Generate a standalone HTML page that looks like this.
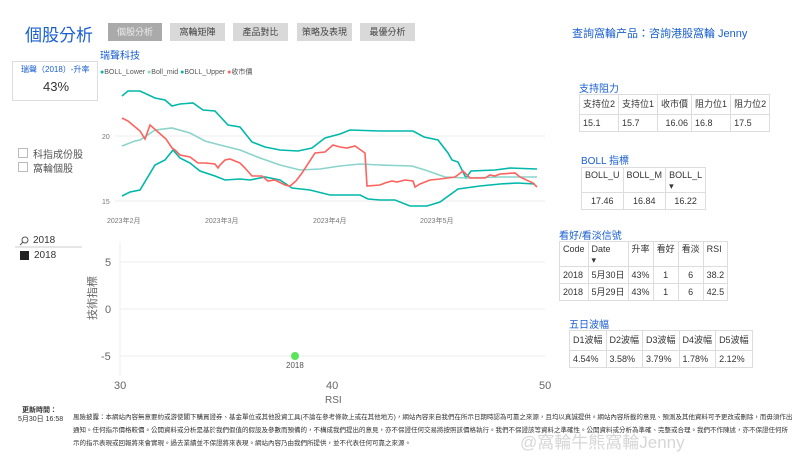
<!DOCTYPE html>
<html><head><meta charset="utf-8"><style>
body{margin:0;width:800px;height:462px;background:#fff;font-family:"Liberation Sans","Noto Sans CJK TC",sans-serif;position:relative;overflow:hidden;color:#333}
.a{position:absolute;white-space:nowrap}
.tab{position:absolute;top:23px;height:18px;background:#d9d9d9;font-size:9px;color:#444;text-align:center;line-height:18px}
table{border-collapse:collapse;font-size:9px;position:absolute;background:#fff}
td{border:1px solid #ddd;padding:0 3px;height:16px;line-height:11px;color:#333}
.h{color:#1a5fd0;font-size:10px}
</style></head><body>
<div class="a" style="left:25px;top:21px;font-size:17px;color:#1a5fd0">個股分析</div>
<div class="tab" style="left:108px;width:54px;background:#aaa;color:#eee">個股分析</div>
<div class="tab" style="left:170px;width:55px">窩輪矩陣</div>
<div class="tab" style="left:233px;width:55px">產品對比</div>
<div class="tab" style="left:297px;width:55px">策略及表現</div>
<div class="tab" style="left:360px;width:55px">最優分析</div>
<div class="a" style="left:572px;top:25px;font-size:11px;color:#1a5fd0">查詢窩輪产品：咨詢港股窩輪 Jenny</div>
<div class="a h" style="left:100px;top:47px">瑞聲科技</div>
<div class="a" style="left:12px;top:61px;width:84px;height:38px;border:1px solid #ddd"></div>
<div class="a" style="left:21px;top:64px;font-size:8px;color:#1a5fd0">瑞聲（2018）-升率</div>
<div class="a" style="left:43px;top:79px;font-size:13px">43%</div>
<div class="a" style="left:100px;top:67px;font-size:7px;color:#555"><span style="color:#01b8aa">●</span>BOLL_Lower <span style="color:#8ad4cc">●</span>Boll_mid <span style="color:#01b8aa">●</span>BOLL_Upper <span style="color:#fd625e">●</span>收市價</div>
<div class="a" style="left:18px;top:146px;font-size:10px;color:#555"><span style="display:inline-block;width:8px;height:8px;border:1px solid #bbb;margin-right:5px"></span>科指成份股</div>
<div class="a" style="left:18px;top:160px;font-size:10px;color:#555"><span style="display:inline-block;width:8px;height:8px;border:1px solid #bbb;margin-right:5px"></span>窩輪個股</div>
<svg class="a" style="left:0;top:0" width="800" height="462">
<g font-size="7" fill="#777"><text x="102" y="139">20</text><text x="102" y="204">15</text>
<text x="107" y="223">2023年2月</text><text x="205" y="223">2023年3月</text><text x="313" y="223">2023年4月</text><text x="420" y="223">2023年5月</text></g>
<line x1="115" y1="136" x2="545" y2="136" stroke="#eee"/><line x1="115" y1="201" x2="545" y2="201" stroke="#eee"/>
<g fill="none" stroke-width="1.6">
<polyline stroke="#01b8aa" points="122,96 128,91 140,91 155,98 165,100 172,106 180,104 193,103 203,110 215,111 228,125 240,127 252,142 265,147 280,150 298,151 312,148 325,138 340,134 350,130 380,131 413,131 424,137 438,140 448,153 452,160 458,162 466,178 471,171 495,170 510,168 537,169"/>
<polyline stroke="#8ad4cc" points="122,146 135,141 140,140 155,130 172,128 190,133 205,141 220,145 240,150 260,158 280,165 300,170 320,169 340,166 360,164 380,165 412,166 425,170 445,177 467,178 500,177 537,177"/>
<polyline stroke="#01b8aa" points="122,196 130,192 140,190 155,165 165,160 173,150 180,158 190,163 200,171 215,176 225,180 240,179 250,180 265,177 280,180 292,188 310,190 330,195 360,195 368,199 380,200 395,200 410,206 427,206 440,202 458,189 480,186 500,184 517,183 535,184"/>
<polyline stroke="#fd625e" points="122,118 128,121 140,131 145,139 150,125 158,132 166,139 172,148 175,150 180,155 190,157 198,163 205,163 215,164 218,168 220,165 225,160 230,159 240,163 245,168 252,176 262,176 268,181 275,180 285,185 290,186 296,181 302,173 315,153 325,152 333,145 340,147 347,148 355,146 365,153 367,186 380,185 385,183 392,181 397,182 405,180 413,181 415,187 420,184 430,180 440,179 455,177 463,171 470,178 485,178 490,175 495,176 500,174 515,173 520,177 533,183 537,187"/>
</g>
<line x1="120" y1="242" x2="120" y2="376" stroke="#eee"/>
<line x1="120" y1="262" x2="545" y2="262" stroke="#eee"/><line x1="120" y1="309" x2="545" y2="309" stroke="#eee"/><line x1="120" y1="356" x2="545" y2="356" stroke="#eee"/>
<g font-size="11" fill="#666"><text x="105" y="266">5</text><text x="105" y="313">0</text><text x="101" y="360">-5</text>
<text x="114" y="389">30</text><text x="326" y="389">40</text><text x="539" y="389">50</text><text x="325" y="403" font-size="10">RSI</text></g>
<text x="0" y="0" font-size="11" fill="#666" transform="translate(96,320) rotate(-90)">技術指標</text>
<circle cx="295" cy="356" r="4" fill="#5be35b"/><text x="286" y="368" font-size="8" fill="#555">2018</text>
<circle cx="25" cy="240" r="3" fill="none" stroke="#555"/><line x1="23" y1="242" x2="20" y2="245" stroke="#555"/>
<line x1="15" y1="247" x2="82" y2="247" stroke="#ccc"/><rect x="20" y="251" width="9" height="9" fill="#222"/>
</svg>
<div class="a" style="left:33px;top:235px;font-size:10px">2018</div>
<div class="a" style="left:34px;top:250px;font-size:10px">2018</div>
<div class="a h" style="left:579px;top:80px">支持阻力</div>
<table style="left:579px;top:94px"><tr><td style="height:19px">支持位2</td><td>支持位1</td><td>收市價</td><td>阻力位1</td><td>阻力位2</td></tr><tr><td>15.1</td><td>15.7</td><td style="text-align:right">16.06</td><td>16.8</td><td>17.5</td></tr></table>
<div class="a h" style="left:581px;top:152px">BOLL 指標</div>
<table style="left:581px;top:167px"><tr><td style="height:20px;vertical-align:top;padding-top:2px">BOLL_U</td><td style="vertical-align:top;padding-top:2px">BOLL_M</td><td style="vertical-align:top;padding-top:2px">BOLL_L<br>▾</td></tr><tr><td style="text-align:center">17.46</td><td style="text-align:center">16.84</td><td style="text-align:center">16.22</td></tr></table>
<div class="a h" style="left:559px;top:227px">看好/看淡信號</div>
<table style="left:559px;top:241px"><tr><td style="height:21px;vertical-align:top;padding-top:2px">Code</td><td style="vertical-align:top;padding-top:2px">Date<br>▾</td><td style="vertical-align:top;padding-top:2px">升率</td><td style="vertical-align:top;padding-top:2px">看好</td><td style="vertical-align:top;padding-top:2px">看淡</td><td style="vertical-align:top;padding-top:2px">RSI</td></tr><tr><td>2018</td><td>5月30日</td><td>43%</td><td style="text-align:center">1</td><td style="text-align:center">6</td><td>38.2</td></tr><tr><td>2018</td><td>5月29日</td><td>43%</td><td style="text-align:center">1</td><td style="text-align:center">6</td><td>42.5</td></tr></table>
<div class="a h" style="left:569px;top:316px">五日波幅</div>
<table style="left:569px;top:330px"><tr><td style="height:19px">D1波幅</td><td>D2波幅</td><td>D3波幅</td><td>D4波幅</td><td>D5波幅</td></tr><tr><td>4.54%</td><td>3.58%</td><td>3.79%</td><td>1.78%</td><td>2.12%</td></tr></table>
<div class="a" style="left:22px;top:405px;font-size:7px;font-weight:bold">更新時間：</div>
<div class="a" style="left:18px;top:414px;font-size:7px">5月30日 16:58</div>
<div class="a" style="left:73px;top:411px;width:720px;white-space:normal;font-size:6.5px;line-height:13px;color:#333">風險披露：本網站內容無意要約或游使閣下購買證券、基金單位或其他投資工具(不論在參考條款上或在其他地方)，網站內容來自我們在所示日期時認為可靠之來源，且均以真誠提供。網站內容所載的意見、預測及其他資料可予更改或刪除，而毋須作出通知。任何指示價格較價。公開資料或分析是基於我們假值的假設及參數而預備的，不構成我們提出的意見，亦不保證任何交易將按照該價格執行。我們不保證該等資料之準確性。公開資料或分析為準確、完整或合理。我們不作陳述，亦不保證任何所示的指示表現或回報將來會實現。過去業績並不保證將來表現。網站內容乃由我們所提供，並不代表任何可靠之來源。</div>
<div class="a" style="left:520px;top:428px;font-size:17px;color:#bbb;opacity:.6">@窩輪牛熊窩輪Jenny</div>
</body></html>
